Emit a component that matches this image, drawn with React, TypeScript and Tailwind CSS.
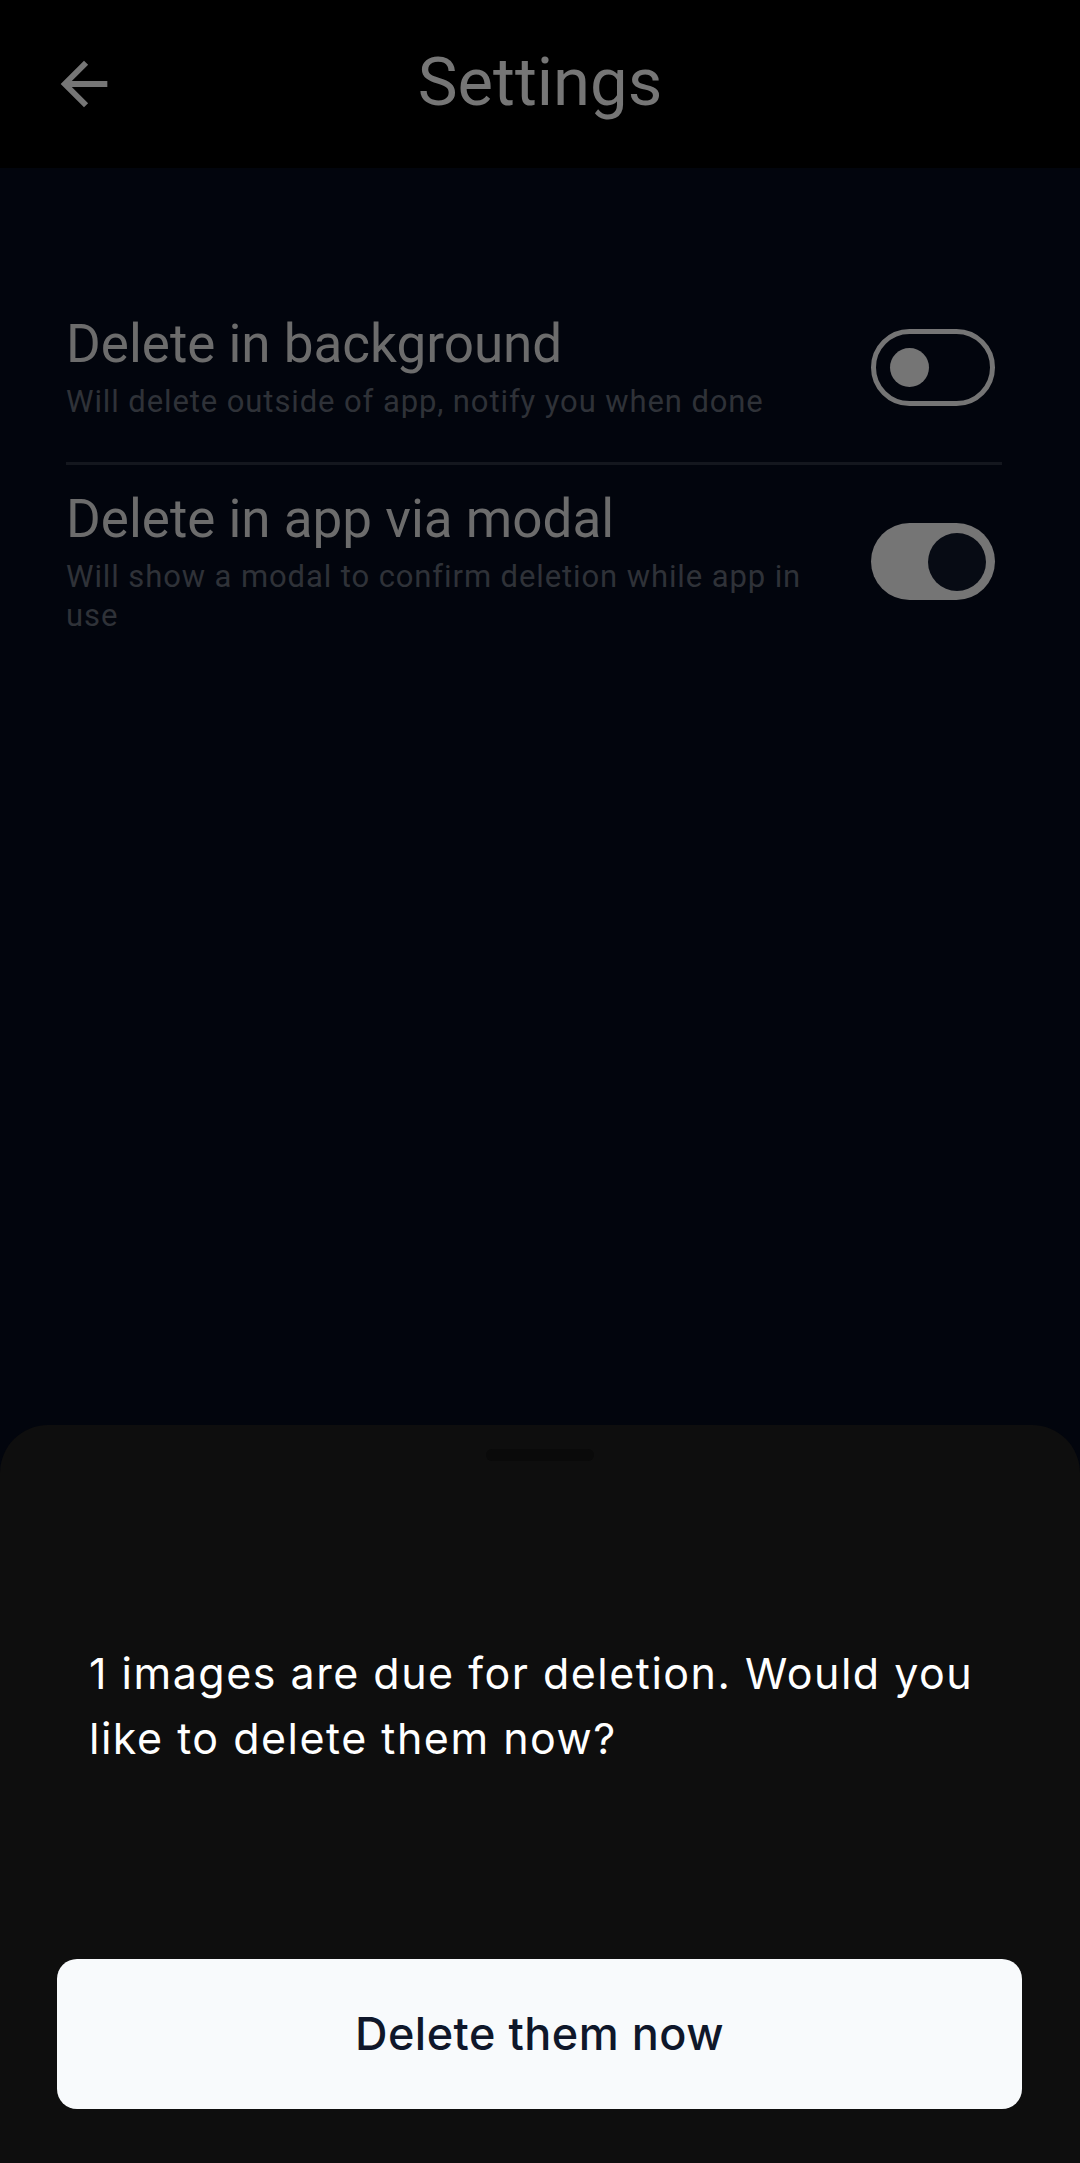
import React from "react";

function BackArrow() {
  return (
    <svg width="70" height="70" viewBox="0 0 24 24" fill="#767676">
      <path d="M20 11H7.83l5.59-5.59L12 4l-8 8 8 8 1.41-1.41L7.83 13H20v-2z" />
    </svg>
  );
}

function Row({
  title,
  subtitle,
  on,
}: {
  title: string;
  subtitle: string;
  on: boolean;
}) {
  return (
    <div className="flex items-center justify-between pl-[66px] pr-[85px]">
      <div className="flex flex-col w-[760px]">
        <div className="text-[53px] leading-[62px] text-[#6c6c6c]">{title}</div>
        <div className="mt-[7px] text-[31px] leading-[39px] tracking-[0.9px] text-[#2f3238]">{subtitle}</div>
      </div>
      {on ? (
        <div className="w-[124px] h-[77px] rounded-full bg-[#757575] flex items-center justify-end pr-[9px] shrink-0">
          <div className="w-[58px] h-[58px] rounded-full bg-[#070b14]" />
        </div>
      ) : (
        <div className="w-[124px] h-[77px] rounded-full border-[5px] border-[#757575] flex items-center pl-[14px] shrink-0">
          <div className="w-[39px] h-[39px] rounded-full bg-[#757575]" />
        </div>
      )}
    </div>
  );
}

export default function App() {
  return (
    <div
      className="relative w-[1080px] h-[2163px] bg-[#02050d] overflow-hidden"
      style={{ fontFamily: "Roboto, 'Noto Sans', sans-serif" }}
    >
      <div className="h-[168px] bg-black relative flex items-center justify-center">
        <div className="absolute left-[49px] top-[49px]">
          <BackArrow />
        </div>
        <div className="text-[67px] leading-none text-[#767676] mt-[-4px]">Settings</div>
      </div>

      <div className="mt-[145px]">
        <Row
          title="Delete in background"
          subtitle="Will delete outside of app, notify you when done"
          on={false}
        />
      </div>
      <div className="mt-[41px] mx-[66px] mr-[78px] h-[3px] bg-[#14171e]" />
      <div className="mt-[23px]">
        <Row
          title="Delete in app via modal"
          subtitle="Will show a modal to confirm deletion while app in use"
          on={true}
        />
      </div>

      <div
        className="absolute left-0 right-0 bottom-0 h-[738px] bg-[#0e0e0e] rounded-t-[48px] flex flex-col"
        style={{ fontFamily: "Inter, 'Noto Sans', sans-serif" }}
      >
        <div className="mt-[24px] mx-auto w-[108px] h-[12px] rounded-full bg-[#0a0a0a]" />
        <div className="mt-[180px] px-[89px] text-[43px] leading-[65px] text-white tracking-[1.5px]">
          1 images are due for deletion. Would you like to delete them now?
        </div>
        <div className="mt-[188px] mx-[57px] mr-[58px] h-[150px] rounded-[20px] bg-[#f8fafc] flex items-center justify-center">
          <span className="text-[45px] font-medium tracking-[0.5px] text-[#0f172a]">Delete them now</span>
        </div>
      </div>
    </div>
  );
}
